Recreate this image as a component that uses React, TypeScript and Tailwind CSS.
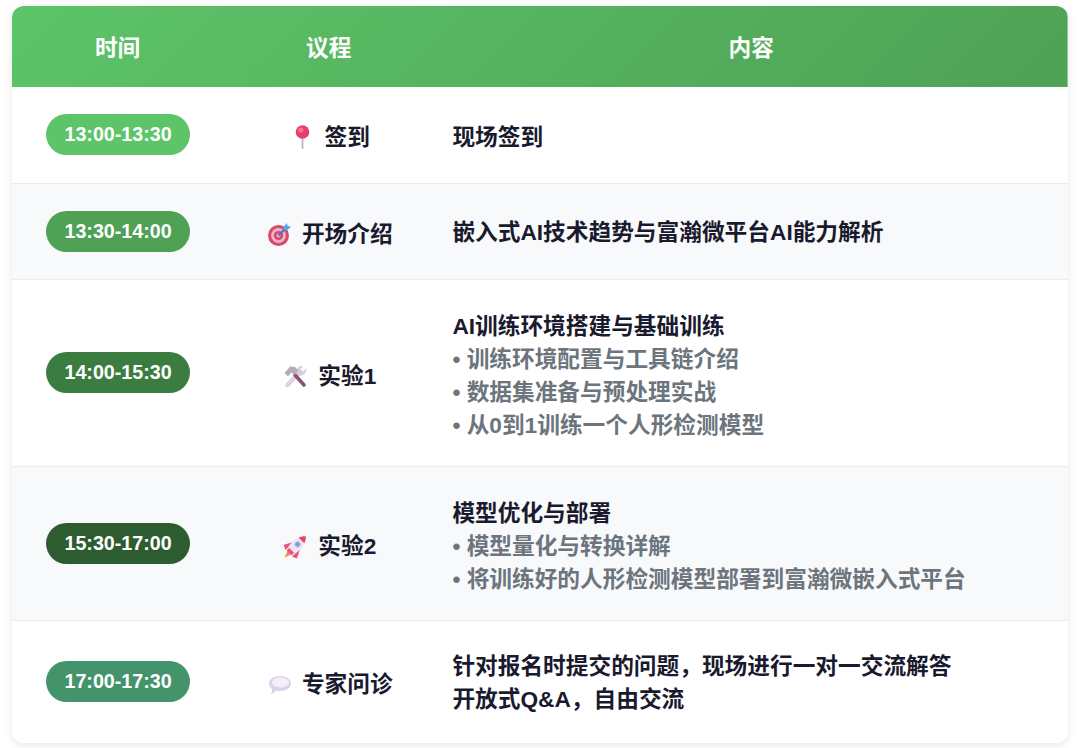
const PinIcon = () => (
  <svg width="25" height="25" viewBox="0 0 25 25" className="shrink-0">
    <rect x="11.6" y="11" width="1.8" height="13" rx="0.9" fill="#b9b4c6" />
    <circle cx="12.5" cy="7" r="6.8" fill="#e63e6d" />
    <circle cx="10.8" cy="5" r="2.6" fill="#f47a9a" />
  </svg>
);

const TargetIcon = () => (
  <svg width="25" height="25" viewBox="0 0 25 25" className="shrink-0">
    <circle cx="11.5" cy="13.5" r="10.5" fill="#d9476b" />
    <circle cx="11.5" cy="13.5" r="7.4" fill="#eeb4c6" />
    <circle cx="11.5" cy="13.5" r="4.6" fill="#d9476b" />
    <circle cx="11.5" cy="13.5" r="2" fill="#eeb4c6" />
    <path d="M11.5 13.5 L19 6" stroke="#3d7fb8" strokeWidth="2.2" />
    <path d="M15.5 6 L20 1 L20.5 4 L24 4.5 L19.5 9 Z" fill="#55a6ea" />
  </svg>
);

const ToolsIcon = () => (
  <svg width="25" height="25" viewBox="0 0 25 25" className="shrink-0">
    <path d="M4.5 21 L16 9" stroke="#dcd2e6" strokeWidth="4.6" strokeLinecap="round" />
    <path d="M13.5 8.5 C13 4.5 16 1.5 20 2 L17.5 5 L19.5 7.5 L23.5 4.5 C24 8.5 20.5 12 16.5 11.5 Z" fill="#d6cce0" />
    <path d="M21 21 L12 11" stroke="#85566a" strokeWidth="3.6" strokeLinecap="round" />
    <path d="M1.5 9 L7 2.5 L12 3 L15.5 6.5 L11.5 11 L8.5 8.5 L5 12.5 Z" fill="#b3aeb9" />
  </svg>
);

const RocketIcon = () => (
  <svg width="25" height="25" viewBox="0 0 25 25" className="shrink-0">
    <g transform="rotate(45 12.5 12.5)">
      <path d="M9.5 20 L15.5 20 L12.5 28 Z" fill="#f2913f" />
      <path d="M7.5 11 L3 20 L8 22 Z" fill="#ea4f80" />
      <path d="M17.5 11 L22 20 L17 22 Z" fill="#ea4f80" />
      <path d="M12.5 -2 C17 2 18 8 18 12 C18 16 17 19 16 21 L9 21 C8 19 7 16 7 12 C7 8 8 2 12.5 -2 Z" fill="#ece6ee" />
      <path d="M12.5 -2 C14.5 -0.2 15.8 2 16.5 4 L8.5 4 C9.2 2 10.5 -0.2 12.5 -2 Z" fill="#ea4560" />
      <rect x="9" y="18" width="7" height="3.5" fill="#ea4f80" />
      <circle cx="12.5" cy="9.5" r="2.8" fill="#7d9fe0" stroke="#c5c9e6" strokeWidth="0.8" />
    </g>
  </svg>
);

const ChatIcon = () => (
  <svg width="25" height="25" viewBox="0 0 25 25" className="shrink-0">
    <path d="M13 4 C18.5 4 24 7 24 11.5 C24 16 18.5 19 13 19 C11.5 19 10 18.8 8.5 18.4 C7.5 20.5 6 21.5 4 22 C5 20 5.5 18.5 5 17 C3 15.7 2 13.8 2 11.5 C2 7 7 4 13 4 Z" fill="#dcd2ee" />
    <ellipse cx="13.5" cy="10.5" rx="8.5" ry="5" fill="#f3eef9" />
  </svg>
);

const rows = [
  {
    time: "13:00-13:30",
    pill: "bg-[#5dc469]",
    icon: <PinIcon />,
    name: "签到",
    title: ["现场签到"],
    points: [],
    pad: "pt-[30px] pb-[24px]",
  },
  {
    time: "13:30-14:00",
    pill: "bg-[#4ea155]",
    icon: <TargetIcon />,
    name: "开场介绍",
    title: ["嵌入式AI技术趋势与富瀚微平台AI能力解析"],
    points: [],
    pad: "pt-[28px] pb-[26px]",
  },
  {
    time: "14:00-15:30",
    pill: "bg-[#3b7d41]",
    icon: <ToolsIcon />,
    name: "实验1",
    title: ["AI训练环境搭建与基础训练"],
    points: ["训练环境配置与工具链介绍", "数据集准备与预处理实战", "从0到1训练一个人形检测模型"],
    pad: "pt-[30px] pb-[24px]",
  },
  {
    time: "15:30-17:00",
    pill: "bg-[#2d5c31]",
    icon: <RocketIcon />,
    name: "实验2",
    title: ["模型优化与部署"],
    points: ["模型量化与转换详解", "将训练好的人形检测模型部署到富瀚微嵌入式平台"],
    pad: "pt-[30px] pb-[24px]",
  },
  {
    time: "17:00-17:30",
    pill: "bg-[#43946b]",
    icon: <ChatIcon />,
    name: "专家问诊",
    title: ["针对报名时提交的问题，现场进行一对一交流解答", "开放式Q&A，自由交流"],
    points: [],
    pad: "pt-[28px] pb-[26px]",
  },
];

export default function App() {
  return (
    <div className="w-[1080px] h-[748px] bg-white px-3 pt-[6px] font-['Liberation_Sans','Noto_Sans_CJK_SC',sans-serif]">
      <div className="rounded-xl overflow-hidden bg-white shadow-[0_2px_10px_rgba(0,0,0,0.1)]">
        <table className="w-full table-fixed border-collapse text-[22.7px] leading-[33px] font-bold text-[#1a1a2e]">
          <thead>
            <tr className="bg-[linear-gradient(135deg,#5dc469,#4ea155)] text-white h-[81px]">
              <th className="w-1/5 pt-1 font-bold">时间</th>
              <th className="w-1/5 pt-1 font-bold">议程</th>
              <th className="pt-1 font-bold">内容</th>
            </tr>
          </thead>
          <tbody>
            {rows.map((row, i) => (
              <tr key={row.time} className={`${i === rows.length - 1 ? "h-[122px]" : "border-b border-[#e9ecef]"} ${i % 2 === 1 ? "bg-[#f8f9fa]" : "bg-white"}`}>
                <td className="pt-[27px] pb-[27.5px] text-center">
                  <span className={`inline-block w-[144px] h-[41px] pl-px rounded-[21px] text-[19.7px] leading-[41px] text-white align-middle ${row.pill}`}>
                    {row.time}
                  </span>
                </td>
                <td className="pt-[30px] pb-[24px] pl-[2px]">
                  <div className="flex items-center justify-center gap-[10px]">
                    {row.icon}
                    <span>{row.name}</span>
                  </div>
                </td>
                <td className={`${row.pad} pl-[18px]`}>
                  {row.title.map((line) => (
                    <div key={line}>{line}</div>
                  ))}
                  {row.points.map((line) => (
                    <div key={line} className="text-[#6c757d]">• {line}</div>
                  ))}
                </td>
              </tr>
            ))}
          </tbody>
        </table>
      </div>
    </div>
  );
}
